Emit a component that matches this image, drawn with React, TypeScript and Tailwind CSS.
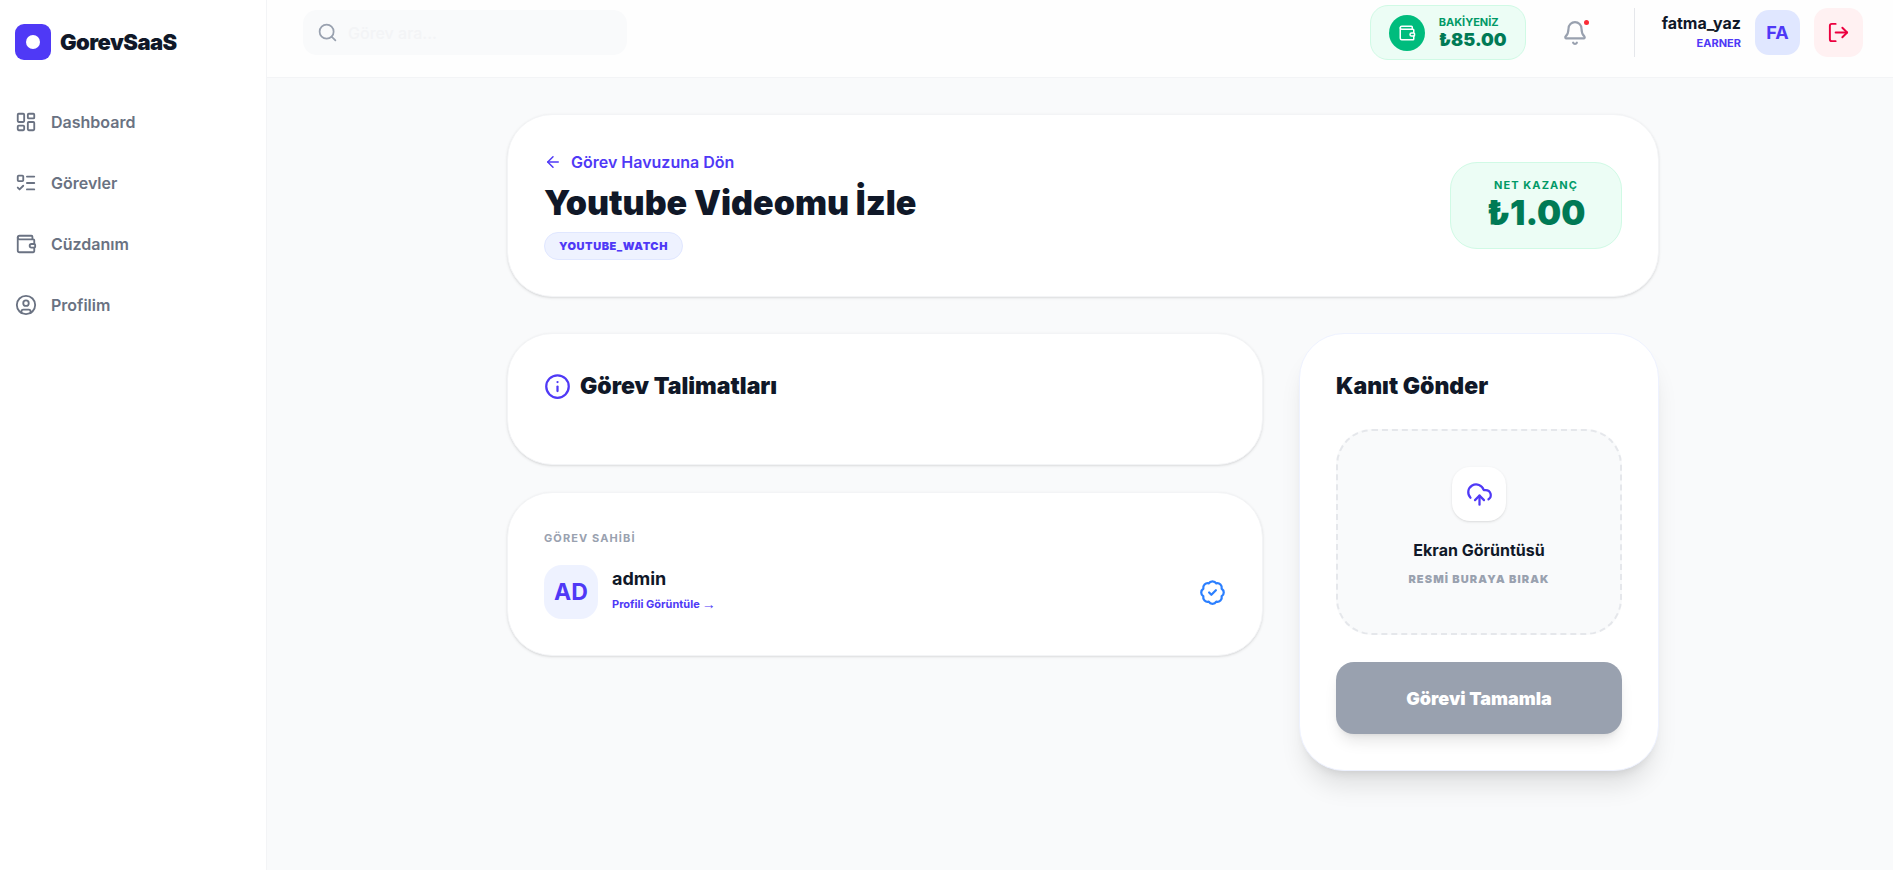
import React from "react";
import {
  ArrowLeft,
  BadgeCheck,
  Bell,
  CircleUser,
  CloudUpload,
  Info,
  LayoutDashboard,
  ListTodo,
  LogOut,
  Search,
  Wallet,
} from "lucide-react";

const navItems = [
  { label: "Dashboard", icon: LayoutDashboard },
  { label: "Görevler", icon: ListTodo },
  { label: "Cüzdanım", icon: Wallet },
  { label: "Profilim", icon: CircleUser },
];

function Sidebar() {
  return (
    <aside className="w-[267px] shrink-0 border-r border-gray-100 bg-white px-[15px] pt-6">
      <a href="#" className="flex items-center gap-[9px]">
        <span className="flex size-9 items-center justify-center rounded-[9px] bg-indigo-600">
          <span className="size-[14px] rounded-full bg-white" />
        </span>
        <span className="text-[22px] leading-8 font-black tracking-tight text-gray-900">GorevSaaS</span>
      </a>
      <nav className="mt-9 flex flex-col gap-[9px]">
        {navItems.map(({ label, icon: Icon }) => (
          <a key={label} href="#" className="flex h-[52px] items-center gap-[14px] text-[16px] font-semibold text-gray-500">
            <Icon size={22} />
            {label}
          </a>
        ))}
      </nav>
    </aside>
  );
}

function Header() {
  return (
    <header className="flex items-center justify-between border-b border-gray-100 bg-[#fefefe] pt-[5px] pr-[30px] pb-[17px] pl-9">
      <label className="flex h-[45px] w-[324px] items-center gap-[10px] rounded-[14px] bg-gray-50 px-[14px] text-gray-400">
        <Search size={21} className="shrink-0" />
        <input
          type="text"
          aria-label="Görev ara"
          placeholder="Görev ara..."
          className="w-full bg-transparent text-[16px] font-medium text-gray-900 outline-none placeholder:text-gray-100"
        />
      </label>
      <div className="flex items-center">
        <div className="flex h-[55px] items-center gap-[14px] rounded-[18px] border border-emerald-100 bg-emerald-50 px-[18px]">
          <span className="flex size-9 items-center justify-center rounded-full bg-emerald-500 text-white">
            <Wallet size={18} />
          </span>
          <div>
            <p className="text-[11px] leading-[14px] font-bold text-emerald-600">BAKİYENİZ</p>
            <p className="text-[18px] leading-[22px] font-black text-emerald-700">₺85.00</p>
          </div>
        </div>
        <button type="button" aria-label="Bildirimler" className="relative mr-9 ml-[27px] flex size-[45px] items-center justify-center text-gray-400">
          <Bell size={26} />
          <span className="absolute top-[10px] right-[9px] size-[5px] rounded-full bg-red-500" />
        </button>
        <div className="flex items-center gap-[14px] border-l border-gray-200 pl-[27px]">
          <div className="pb-[2px] text-right">
            <p className="text-[16px] leading-[22px] font-bold text-gray-900">fatma_yaz</p>
            <p className="text-[11px] leading-[18px] font-bold text-indigo-600">EARNER</p>
          </div>
          <span className="flex size-[45px] items-center justify-center rounded-[14px] bg-indigo-100 text-[18px] font-bold text-indigo-600">FA</span>
          <button type="button" aria-label="Çıkış yap" className="flex size-[49px] items-center justify-center rounded-[14px] bg-rose-50 text-rose-600">
            <LogOut size={23} />
          </button>
        </div>
      </div>
    </header>
  );
}

function TaskHeader() {
  return (
    <section className="flex items-center justify-between rounded-[45px] border border-gray-100 bg-white p-9 shadow-sm">
      <div className="flex flex-col items-start">
        <a href="#" className="flex items-center gap-[9px] text-[16px] leading-[22px] font-semibold text-indigo-600">
          <ArrowLeft size={18} />
          Görev Havuzuna Dön
        </a>
        <h1 className="mt-[9px] text-[34px] leading-[41px] font-black text-gray-900">Youtube Videomu İzle</h1>
        <span className="mt-[9px] rounded-full border border-indigo-100 bg-indigo-50 px-[14px] py-[5px] text-[11px] leading-4 font-black tracking-wider text-indigo-600">
          YOUTUBE_WATCH
        </span>
      </div>
      <div className="flex h-[87px] w-[172px] flex-col items-center justify-center rounded-[27px] border border-emerald-100 bg-emerald-50">
        <p className="text-[11px] leading-[14px] font-bold tracking-widest text-emerald-600">NET KAZANÇ</p>
        <p className="text-[34px] leading-[41px] font-black text-emerald-700">₺1.00</p>
      </div>
    </section>
  );
}

function OwnerCard() {
  return (
    <section className="rounded-[45px] border border-gray-100 bg-white p-9 shadow-sm">
      <h3 className="text-[11px] leading-[18px] font-bold tracking-widest text-gray-400">GÖREV SAHİBİ</h3>
      <div className="mt-[18px] flex items-center gap-[14px]">
        <span className="flex size-[54px] items-center justify-center rounded-[18px] bg-indigo-50 text-[23px] font-bold text-indigo-600">AD</span>
        <div className="flex-1 pb-[3px]">
          <p className="text-[18px] leading-[27px] font-bold text-gray-900">admin</p>
          <a href="#" className="flex items-center gap-[2px] text-[11px] leading-6 font-bold text-indigo-600">
            Profili Görüntüle
            <span className="font-['Liberation_Sans',sans-serif] text-[14px]">→</span>
          </a>
        </div>
        <BadgeCheck size={27} className="text-blue-500" />
      </div>
    </section>
  );
}

function ProofCard() {
  return (
    <section className="rounded-[45px] border border-indigo-50 bg-white p-9 shadow-xl">
      <h2 className="text-[23px] leading-8 font-black text-gray-900">Kanıt Gönder</h2>
      <button type="button" className="mt-[27px] flex w-full flex-col items-center rounded-[36px] border-2 border-dashed border-gray-200 bg-gray-50 px-9 pt-9 pb-[45px]">
        <span className="flex size-[54px] items-center justify-center rounded-[18px] bg-white text-indigo-600 shadow-sm">
          <CloudUpload size={27} />
        </span>
        <span className="mt-[18px] text-[16px] leading-[22px] font-bold text-gray-900">Ekran Görüntüsü</span>
        <span className="mt-[9px] text-[11px] leading-[18px] font-black tracking-widest text-gray-400">RESMİ BURAYA BIRAK</span>
      </button>
      <button type="button" className="mt-[27px] flex h-[72px] w-full items-center justify-center rounded-[18px] bg-gray-400 text-[18px] font-black text-white shadow-lg">
        Görevi Tamamla
      </button>
    </section>
  );
}

export default function App() {
  return (
    <div className="flex min-h-screen bg-gray-50 font-['Inter',sans-serif]">
      <Sidebar />
      <div className="min-w-0 flex-1">
        <Header />
        <main className="pt-9 pr-[30px] pb-9 pl-9">
          <div className="mx-auto flex max-w-[1152px] flex-col gap-9">
            <TaskHeader />
            <div className="grid grid-cols-3 items-start gap-9">
              <div className="col-span-2 flex flex-col gap-[27px]">
                <section className="rounded-[45px] border border-gray-100 bg-white p-9 pb-[62px] shadow-sm">
                  <h2 className="flex items-center gap-[9px] text-[23px] leading-8 font-black text-gray-900">
                    <Info size={27} className="text-indigo-600" />
                    Görev Talimatları
                  </h2>
                </section>
                <OwnerCard />
              </div>
              <ProofCard />
            </div>
          </div>
        </main>
      </div>
    </div>
  );
}
